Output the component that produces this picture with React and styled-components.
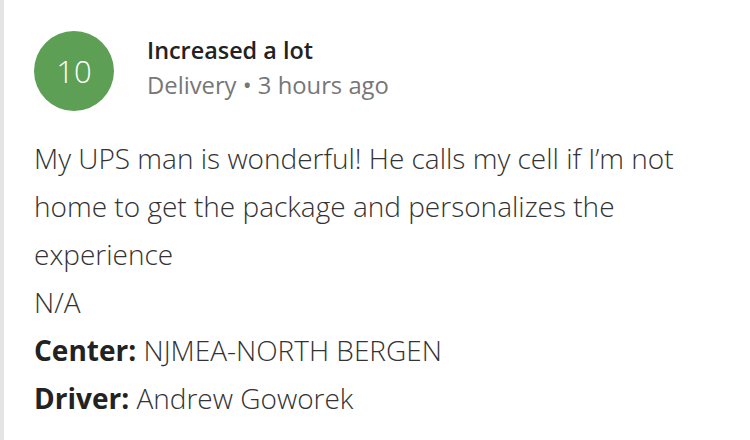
import React from "react";
import styled, { createGlobalStyle } from "styled-components";

const Global = createGlobalStyle`
  html, body { margin: 0; padding: 0; background: #fff; }
  body { font-family: "Open Sans", "Liberation Sans", sans-serif; }
`;

const Card = styled.div`
  width: 750px;
  height: 440px;
  box-sizing: border-box;
  border-left: 4px solid #e4e4e4;
  padding: 31px 0 0 30px;
  background: #fff;
`;

const Header = styled.div`
  display: flex;
  align-items: center;
  gap: 33px;
`;

const Score = styled.div`
  width: 80px;
  height: 80px;
  border-radius: 50%;
  background: #5c9f55;
  color: #fff;
  display: flex;
  align-items: center;
  justify-content: center;
  font-size: 31px;
  font-weight: 300;
  flex-shrink: 0;
`;

const Meta = styled.div`
  display: flex;
  flex-direction: column;
  margin-top: -6px;
`;

const Title = styled.div`
  font-size: 23.4px;
  font-weight: 600;
  color: #222;
  line-height: 35px;
`;

const Sub = styled.div`
  font-size: 23.8px;
  font-weight: 400;
  color: #777;
  line-height: 35px;
`;

const Body = styled.div`
  margin-top: 23px;
  width: 680px;
  font-size: 28px;
  font-weight: 300;
  color: #333;
  line-height: 48px;
`;

const Line = styled.div``;

const Label = styled.span`
  font-weight: 700;
  color: #222;
`;

export default function App() {
  return (
    <>
      <Global />
      <Card>
        <Header>
          <Score>10</Score>
          <Meta>
            <Title>Increased a lot</Title>
            <Sub>Delivery • 3 hours ago</Sub>
          </Meta>
        </Header>
        <Body>
          <Line>My UPS man is wonderful! He calls my cell if I’m not home to get the package and personalizes the experience</Line>
          <Line>N/A</Line>
          <Line><Label>Center:</Label> NJMEA-NORTH BERGEN</Line>
          <Line><Label>Driver:</Label> Andrew Goworek</Line>
        </Body>
      </Card>
    </>
  );
}
